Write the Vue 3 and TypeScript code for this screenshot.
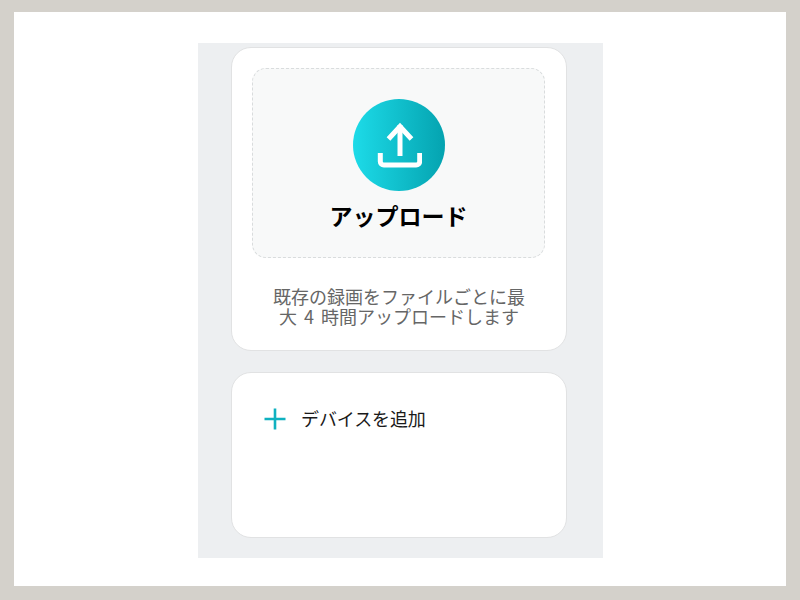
<script setup lang="ts">
const title: string = 'アップロード'
</script>

<template>
  <div class="frame">
    <div class="sheet">
      <main class="panel">
        <section class="card upload-card">
          <div class="dropzone">
            <div class="circle">
              <svg class="upload-icon" width="46" height="46" viewBox="0 0 46 46" fill="none" stroke="#fff" stroke-width="5">
                <path d="M24 3v31" />
                <path d="M12.500 17L24 4.500 35.500 17" />
                <path d="M4.300 31v8.500a3.500 3.500 0 0 0 3.500 3.500h32.400a3.500 3.500 0 0 0 3.500-3.500V31" />
              </svg>
            </div>
            <h2 class="title">{{ title }}</h2>
          </div>
          <p class="desc">既存の録画をファイルごとに最<br />大 4 時間アップロードします</p>
        </section>
        <section class="card device-card">
          <div class="device-row">
            <svg class="plus" width="22" height="22" viewBox="0 0 22 22" fill="none" stroke="#0fb1c0" stroke-width="2.6">
              <path d="M11 .5v21M.5 11h21" />
            </svg>
            <span class="device-label">デバイスを追加</span>
          </div>
        </section>
      </main>
    </div>
  </div>
</template>

<style>
html, body { margin: 0; padding: 0; }
</style>

<style scoped>
.frame {
  width: 800px;
  height: 600px;
  box-sizing: border-box;
  padding: 12px 14px 14px;
  background: #d4d1cb;
  font-family: "Noto Sans CJK JP", "Liberation Sans", sans-serif;
}
.sheet {
  height: 100%;
  background: #fff;
  padding-top: 31px;
  padding-left: 184px;
  box-sizing: border-box;
}
.panel {
  width: 405px;
  height: 515px;
  box-sizing: border-box;
  background: #edeff1;
  padding: 4px 36px 20px 33px;
  display: flex;
  flex-direction: column;
  gap: 21px;
}
.card {
  box-sizing: border-box;
  background: #fff;
  border: 1px solid #e1e2e3;
  border-radius: 20px;
}
.upload-card {
  height: 304px;
  padding: 20px 20px 0;
}
.dropzone {
  width: 293px;
  height: 190px;
  box-sizing: border-box;
  border: 1px dashed #d9dcdd;
  border-radius: 14px;
  background: #f8f9f9;
  display: flex;
  flex-direction: column;
  align-items: center;
  padding-top: 30px;
}
.circle {
  width: 92px;
  height: 92px;
  border-radius: 50%;
  background: linear-gradient(90deg, #1ddbe8, #04a3b0);
  display: flex;
  align-items: center;
  justify-content: center;
}
.title {
  margin: 7px 0 0;
  font-size: 23px;
  line-height: 34px;
  font-weight: 700;
  color: #000;
}
.desc {
  margin: 28px 0 0;
  text-align: center;
  font-size: 18px;
  line-height: 20px;
  word-spacing: 3px;
  color: #666;
}
.device-card {
  height: 166px;
  padding: 33px 32px 0;
}
.device-row {
  display: flex;
  align-items: center;
  gap: 15px;
}
.plus {
  margin-top: 2px;
}
.device-label {
  font-size: 18px;
  line-height: 24px;
  letter-spacing: -0.1px;
  color: #1a1a1a;
}
</style>
